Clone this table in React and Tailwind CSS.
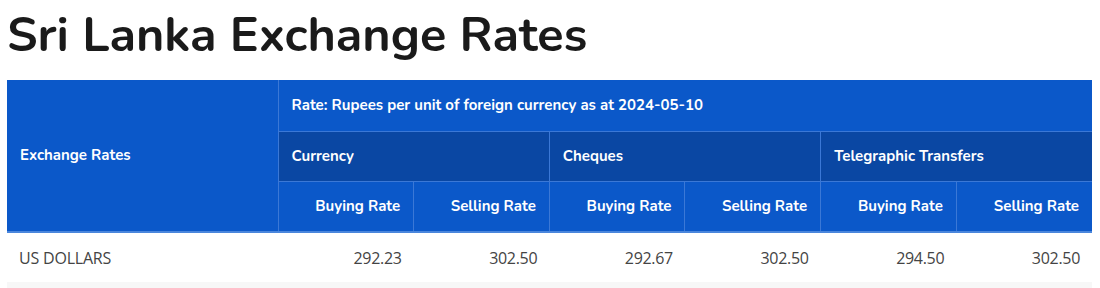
const groups = ["Currency", "Cheques", "Telegraphic Transfers"];
const row = { name: "US DOLLARS", values: ["292.23", "302.50", "292.67", "302.50", "294.50", "302.50"] };

const font = { fontFamily: "Nunito, Lato, 'Noto Sans', sans-serif" };

export default function App() {
  return (
    <div className="bg-white h-[288px] overflow-hidden px-[7px] pt-[1px]" style={font}>
      <h1 className="text-[48.5px] leading-[68px] font-bold text-[#1a1a1a] mb-[11px]">
        Sri Lanka Exchange Rates
      </h1>
      <table className="w-[1085px] table-fixed border-collapse text-[15px]">
        <colgroup>
          <col className="w-[271px]" />
          {row.values.map((_, i) => (
            <col key={i} className="w-[135.67px]" />
          ))}
        </colgroup>
        <thead className="text-white font-bold">
          <tr className="h-[51px] bg-[#0b58c9]">
            <th rowSpan={3} className="text-left px-[13px] font-bold border-r border-[#3b78d6]">
              Exchange Rates
            </th>
            <th colSpan={6} className="text-left px-[13px] font-bold border-b border-[#3b78d6]">
              Rate: Rupees per unit of foreign currency as at 2024-05-10
            </th>
          </tr>
          <tr className="h-[50px] bg-[#0a47a3]">
            {groups.map((g, i) => (
              <th
                key={g}
                colSpan={2}
                className={`text-left px-[13px] font-bold border-b border-[#3b78d6] ${i < 2 ? "border-r" : ""}`}
              >
                {g}
              </th>
            ))}
          </tr>
          <tr className="h-[51px] bg-[#0b58c9] border-b-2 border-[#4a86dc]">
            {row.values.map((_, i) => (
              <th
                key={i}
                className={`text-right px-[13px] font-bold ${i < 5 ? "border-r border-[#3b78d6]" : ""}`}
              >
                {i % 2 === 0 ? "Buying Rate" : "Selling Rate"}
              </th>
            ))}
          </tr>
        </thead>
        <tbody className="text-[#444]" style={{ fontFamily: "'Open Sans', 'Noto Sans', sans-serif" }}>
          <tr className="h-[50px] bg-white">
            <td className="px-[12px] text-[16px] tracking-[-0.2px]">{row.name}</td>
            {row.values.map((v, i) => (
              <td key={i} className="px-[12px] text-right text-[16px] tracking-[-0.3px]">
                {v}
              </td>
            ))}
          </tr>
          <tr className="h-[50px] bg-[#f7f7f7]">
            <td colSpan={7} />
          </tr>
        </tbody>
      </table>
    </div>
  );
}
